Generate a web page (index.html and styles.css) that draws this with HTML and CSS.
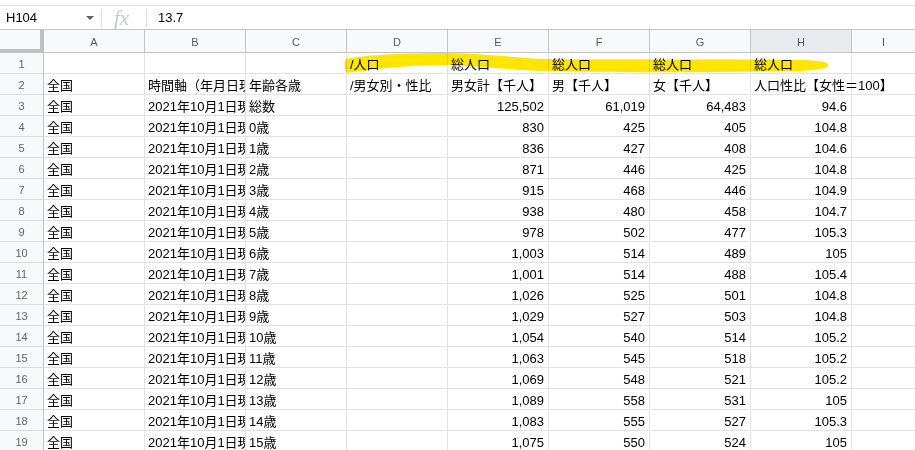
FILE: index.html
```html
<!DOCTYPE html>
<html lang="ja">
<head>
<meta charset="utf-8">
<title>Sheet</title>
<link rel="stylesheet" href="styles.css">
</head>
<body>
<div class="app">
  <div class="formula-bar">
    <div class="name-box"><span class="name">H104</span><span class="caret"></span></div>
    <div class="sep"></div>
    <div class="fx">fx</div>
    <div class="sep"></div>
    <div class="value">13.7</div>
  </div>
  <div class="sheet">
    <div class="row head">
      <div class="corner"></div>
      <div class="ch">A</div><div class="ch">B</div><div class="ch">C</div><div class="ch">D</div><div class="ch">E</div><div class="ch">F</div><div class="ch">G</div><div class="ch sel">H</div><div class="ch last">I</div>
    </div>
    <div class="row r1"><div class="rn">1</div><div class="c"></div><div class="c"></div><div class="c"></div><div class="c">/人口</div><div class="c">総人口</div><div class="c">総人口</div><div class="c">総人口</div><div class="c">総人口</div><div class="c last"></div></div>
    <div class="row"><div class="rn">2</div><div class="c">全国</div><div class="c">時間軸（年月日現在）</div><div class="c">年齢各歳</div><div class="c">/男女別・性比</div><div class="c">男女計【千人】</div><div class="c">男【千人】</div><div class="c">女【千人】</div><div class="c spill">人口性比【女性＝100】</div><div class="c last"></div></div>
    <div class="row"><div class="rn">3</div><div class="c">全国</div><div class="c">2021年10月1日現在</div><div class="c">総数</div><div class="c"></div><div class="c n">125,502</div><div class="c n">61,019</div><div class="c n">64,483</div><div class="c n">94.6</div><div class="c last"></div></div>
    <div class="row"><div class="rn">4</div><div class="c">全国</div><div class="c">2021年10月1日現在</div><div class="c">0歳</div><div class="c"></div><div class="c n">830</div><div class="c n">425</div><div class="c n">405</div><div class="c n">104.8</div><div class="c last"></div></div>
    <div class="row"><div class="rn">5</div><div class="c">全国</div><div class="c">2021年10月1日現在</div><div class="c">1歳</div><div class="c"></div><div class="c n">836</div><div class="c n">427</div><div class="c n">408</div><div class="c n">104.6</div><div class="c last"></div></div>
    <div class="row"><div class="rn">6</div><div class="c">全国</div><div class="c">2021年10月1日現在</div><div class="c">2歳</div><div class="c"></div><div class="c n">871</div><div class="c n">446</div><div class="c n">425</div><div class="c n">104.8</div><div class="c last"></div></div>
    <div class="row"><div class="rn">7</div><div class="c">全国</div><div class="c">2021年10月1日現在</div><div class="c">3歳</div><div class="c"></div><div class="c n">915</div><div class="c n">468</div><div class="c n">446</div><div class="c n">104.9</div><div class="c last"></div></div>
    <div class="row"><div class="rn">8</div><div class="c">全国</div><div class="c">2021年10月1日現在</div><div class="c">4歳</div><div class="c"></div><div class="c n">938</div><div class="c n">480</div><div class="c n">458</div><div class="c n">104.7</div><div class="c last"></div></div>
    <div class="row"><div class="rn">9</div><div class="c">全国</div><div class="c">2021年10月1日現在</div><div class="c">5歳</div><div class="c"></div><div class="c n">978</div><div class="c n">502</div><div class="c n">477</div><div class="c n">105.3</div><div class="c last"></div></div>
    <div class="row"><div class="rn">10</div><div class="c">全国</div><div class="c">2021年10月1日現在</div><div class="c">6歳</div><div class="c"></div><div class="c n">1,003</div><div class="c n">514</div><div class="c n">489</div><div class="c n">105</div><div class="c last"></div></div>
    <div class="row"><div class="rn">11</div><div class="c">全国</div><div class="c">2021年10月1日現在</div><div class="c">7歳</div><div class="c"></div><div class="c n">1,001</div><div class="c n">514</div><div class="c n">488</div><div class="c n">105.4</div><div class="c last"></div></div>
    <div class="row"><div class="rn">12</div><div class="c">全国</div><div class="c">2021年10月1日現在</div><div class="c">8歳</div><div class="c"></div><div class="c n">1,026</div><div class="c n">525</div><div class="c n">501</div><div class="c n">104.8</div><div class="c last"></div></div>
    <div class="row"><div class="rn">13</div><div class="c">全国</div><div class="c">2021年10月1日現在</div><div class="c">9歳</div><div class="c"></div><div class="c n">1,029</div><div class="c n">527</div><div class="c n">503</div><div class="c n">104.8</div><div class="c last"></div></div>
    <div class="row"><div class="rn">14</div><div class="c">全国</div><div class="c">2021年10月1日現在</div><div class="c">10歳</div><div class="c"></div><div class="c n">1,054</div><div class="c n">540</div><div class="c n">514</div><div class="c n">105.2</div><div class="c last"></div></div>
    <div class="row"><div class="rn">15</div><div class="c">全国</div><div class="c">2021年10月1日現在</div><div class="c">11歳</div><div class="c"></div><div class="c n">1,063</div><div class="c n">545</div><div class="c n">518</div><div class="c n">105.2</div><div class="c last"></div></div>
    <div class="row"><div class="rn">16</div><div class="c">全国</div><div class="c">2021年10月1日現在</div><div class="c">12歳</div><div class="c"></div><div class="c n">1,069</div><div class="c n">548</div><div class="c n">521</div><div class="c n">105.2</div><div class="c last"></div></div>
    <div class="row"><div class="rn">17</div><div class="c">全国</div><div class="c">2021年10月1日現在</div><div class="c">13歳</div><div class="c"></div><div class="c n">1,089</div><div class="c n">558</div><div class="c n">531</div><div class="c n">105</div><div class="c last"></div></div>
    <div class="row"><div class="rn">18</div><div class="c">全国</div><div class="c">2021年10月1日現在</div><div class="c">14歳</div><div class="c"></div><div class="c n">1,083</div><div class="c n">555</div><div class="c n">527</div><div class="c n">105.3</div><div class="c last"></div></div>
    <div class="row"><div class="rn">19</div><div class="c">全国</div><div class="c">2021年10月1日現在</div><div class="c">15歳</div><div class="c"></div><div class="c n">1,075</div><div class="c n">550</div><div class="c n">524</div><div class="c n">105</div><div class="c last"></div></div>
  </div>
  <svg class="marker" width="915" height="450" viewBox="0 0 915 450" aria-hidden="true">
    <path d="M346 59 C365 55 400 53 447 53 C490 54 520 58 545 59 C600 60 700 59 790 60 C815 60 826 61 828 64 C830 68 822 70 800 71 C720 72 620 73 545 71 C510 70 480 66 447 65 C410 65 380 68 347 73 C344 70 344 62 346 59 Z" fill="#ffe500"/>
  </svg>
</div>
</body>
</html>
```
FILE: styles.css
```css
* { box-sizing: border-box; }
html, body { margin: 0; padding: 0; background: #fff; }
body {
  font-family: "Liberation Sans", Arial, "Noto Sans CJK JP", sans-serif;
  font-size: 13px;
  color: #000;
  width: 915px;
  height: 450px;
  overflow: hidden;
}
.app { position: relative; width: 915px; height: 450px; overflow: hidden; }

.formula-bar {
  margin-top: 5px;
  height: 24px;
  border-top: 1px solid #e3e3e3;
  display: flex;
  align-items: center;
}
.name-box {
  width: 101px;
  display: flex;
  align-items: center;
  padding-left: 6px;
}
.name { flex: 1; color: #000; }
.caret {
  width: 0; height: 0;
  border-left: 4px solid transparent;
  border-right: 4px solid transparent;
  border-top: 4px solid #5f6368;
  margin-right: 7px;
}
.sep { width: 1px; height: 18px; background: #dadce0; }
.fx {
  width: 44px;
  padding-left: 12px;
  font-family: "Liberation Serif", "DejaVu Serif", serif;
  font-style: italic;
  font-size: 21px;
  line-height: 20px;
  color: #c7c9cc;
}
.value { padding-left: 11px; }

.sheet { display: flex; flex-direction: column; }
.row { display: flex; height: 21px; }
.row.head { height: 24px; border-top: 1px solid #c4c4c4; }
.row.r1 { height: 21px; }

.corner {
  width: 44px;
  flex: none;
  background: #f8f9fa;
  border-right: 4px solid #c0c0c0;
  border-bottom: 4px solid #c0c0c0;
}
.ch {
  width: 101px;
  flex: none;
  background: #f8f9fa;
  border-right: 1px solid #c4c4c4;
  border-bottom: 1px solid #c4c4c4;
  color: #555a60;
  font-family: "Liberation Sans", Arial, sans-serif;
  font-size: 11px;
  display: flex;
  align-items: center;
  justify-content: center;
  padding-top: 1px;
}
.ch.sel { background: #e8eaed; }
.ch.last, .c.last { flex: 1; width: auto; border-right: none; }

.rn {
  width: 44px;
  flex: none;
  background: #f8f9fa;
  border-right: 1px solid #c4c4c4;
  border-bottom: 1px solid #d9d9d9;
  color: #5f6368;
  font-family: "Liberation Sans", Arial, sans-serif;
  font-size: 11px;
  display: flex;
  align-items: center;
  justify-content: center;
  padding-top: 2px;
}
.c {
  width: 101px;
  flex: none;
  border-right: 1px solid #e2e2e2;
  border-bottom: 1px solid #e2e2e2;
  padding: 3px 4px 0 3px;
  white-space: nowrap;
  overflow: hidden;
  line-height: 18px;
}
.c.n { text-align: right; padding-right: 4px; }
.c.spill { overflow: visible; position: relative; z-index: 1; }

.marker {
  position: absolute;
  left: 0;
  top: 0;
  pointer-events: none;
  mix-blend-mode: multiply;
}
```
